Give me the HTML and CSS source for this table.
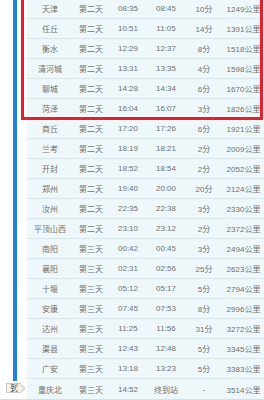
FILE: index.html
```html
<!DOCTYPE html>
<html>
<head>
<meta charset="utf-8">
<link rel="stylesheet" href="styles.css">
</head>
<body>
<div class="wrap">
  <div class="rail">
    <div class="line"></div>
    <div class="end"><span class="tag">到</span></div>
  </div>
  <div class="table">
    <div class="row"><span>天津</span><span>第二天</span><span>08:35</span><span>08:45</span><span>10分</span><span>1249公里</span></div>
    <div class="row"><span>任丘</span><span>第二天</span><span>10:51</span><span>11:05</span><span>14分</span><span>1391公里</span></div>
    <div class="row"><span>衡水</span><span>第二天</span><span>12:29</span><span>12:37</span><span>8分</span><span>1518公里</span></div>
    <div class="row"><span>清河城</span><span>第二天</span><span>13:31</span><span>13:35</span><span>4分</span><span>1598公里</span></div>
    <div class="row"><span>聊城</span><span>第二天</span><span>14:28</span><span>14:34</span><span>6分</span><span>1670公里</span></div>
    <div class="row"><span>菏泽</span><span>第二天</span><span>16:04</span><span>16:07</span><span>3分</span><span>1826公里</span></div>
    <div class="row"><span>商丘</span><span>第二天</span><span>17:20</span><span>17:26</span><span>6分</span><span>1921公里</span></div>
    <div class="row"><span>兰考</span><span>第二天</span><span>18:19</span><span>18:21</span><span>2分</span><span>2009公里</span></div>
    <div class="row"><span>开封</span><span>第二天</span><span>18:52</span><span>18:54</span><span>2分</span><span>2052公里</span></div>
    <div class="row"><span>郑州</span><span>第二天</span><span>19:40</span><span>20:00</span><span>20分</span><span>2124公里</span></div>
    <div class="row"><span>汝州</span><span>第二天</span><span>22:35</span><span>22:38</span><span>3分</span><span>2330公里</span></div>
    <div class="row"><span>平顶山西</span><span>第二天</span><span>23:10</span><span>23:12</span><span>2分</span><span>2372公里</span></div>
    <div class="row"><span>南阳</span><span>第三天</span><span>00:42</span><span>00:45</span><span>3分</span><span>2494公里</span></div>
    <div class="row"><span>襄阳</span><span>第三天</span><span>02:31</span><span>02:56</span><span>25分</span><span>2623公里</span></div>
    <div class="row"><span>十堰</span><span>第三天</span><span>05:12</span><span>05:17</span><span>5分</span><span>2794公里</span></div>
    <div class="row"><span>安康</span><span>第三天</span><span>07:45</span><span>07:53</span><span>8分</span><span>2996公里</span></div>
    <div class="row"><span>达州</span><span>第三天</span><span>11:25</span><span>11:56</span><span>31分</span><span>3272公里</span></div>
    <div class="row"><span>渠县</span><span>第三天</span><span>12:43</span><span>12:48</span><span>5分</span><span>3345公里</span></div>
    <div class="row"><span>广安</span><span>第三天</span><span>13:18</span><span>13:23</span><span>5分</span><span>3383公里</span></div>
    <div class="row last"><span>重庆北</span><span>第三天</span><span>14:52</span><span>终到站</span><span>-</span><span>3514公里</span></div>
  </div>
  <div class="highlight"></div>
</div>
</body>
</html>
```
FILE: styles.css
```css
html, body {
  margin: 0;
  padding: 0;
  background: #ffffff;
  overflow: hidden;
}
body {
  width: 264px;
  height: 400px;
  font-family: "Liberation Sans", "Noto Sans CJK SC", sans-serif;
  font-size: 8px;
  color: #707070;
}
.wrap {
  position: relative;
  display: flex;
  margin-top: -1px;
  border-bottom: 1px solid #d6dfe2;
}
.rail {
  width: 27px;
  flex: none;
  display: flex;
  flex-direction: column;
}
.line {
  flex: 1;
  width: 4px;
  margin-left: 13px;
  background: #1b82d6;
}
.end {
  height: 18px;
  padding-top: 2px;
  box-sizing: border-box;
}
.tag {
  position: relative;
  display: block;
  margin-left: 6px;
  width: 15px;
  height: 10px;
  line-height: 10px;
  padding-left: 3px;
  box-sizing: border-box;
  background: #f3f3f3;
  border: 1px solid #c9c9c9;
  border-right: none;
  color: #333;
  font-size: 8px;
}
.tag::after {
  content: "";
  position: absolute;
  right: -3px;
  top: 1px;
  width: 6px;
  height: 6px;
  background: #f3f3f3;
  border-top: 1px solid #c9c9c9;
  border-right: 1px solid #c9c9c9;
  transform: rotate(45deg);
}
.table {
  flex: 1;
  background: #eef8fa;
}
.row {
  display: grid;
  grid-template-columns: 46px 36px 38px 38px 38px 41px;
  height: 20px;
  box-sizing: border-box;
  border-bottom: 1px solid #d8e5e9;
  align-items: center;
  white-space: nowrap;
}
.row.last {
  border-bottom: none;
}
.row span {
  text-align: center;
}
.highlight {
  position: absolute;
  left: 21px;
  right: 1px;
  top: -9px;
  height: 130px;
  box-sizing: border-box;
  border: 3px solid #e5202a;
}
```
